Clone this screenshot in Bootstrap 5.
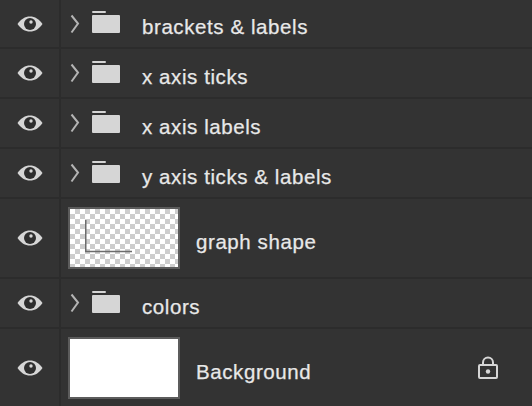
<!doctype html>
<html><head><meta charset="utf-8">
<link href="https://cdn.jsdelivr.net/npm/bootstrap@5.3.0/dist/css/bootstrap.min.css" rel="stylesheet">
<style>
html,body{margin:0;height:406px;overflow:hidden;background:#333}
.panel{font-family:"Liberation Sans",Arial,sans-serif;font-size:20.5px;color:#e8e8e8;letter-spacing:.58px;-webkit-text-stroke:.25px #e8e8e8}
.lyr{height:50px;border-bottom:2px solid #2c2c2c;background:#333}
.lyr.first{height:49px}
.lyr.tall{height:80px}
.lyr.last{height:78px;border-bottom:0}
.vis{width:61px;height:100%;border-right:2px solid #2c2c2c;flex:none}
.eye{width:26px;height:16px;display:block}
.chev{width:10px;height:20px;margin-left:9px;margin-top:0;flex:none}
.fold{width:28px;height:24px;margin-left:12px;margin-top:-1px;flex:none}
.fname{margin-left:22px;margin-top:8px}
.thumb{width:112px;height:62px;margin-left:7px;border:2px solid #5c5c5c;flex:none;background-color:#fff;background-image:conic-gradient(#cdcdcd 25%,#fff 0 50%,#cdcdcd 0 75%,#fff 0);background-size:10px 10px;background-position:0 0}
.thumb.solid{background-image:none}
.tname{margin-left:16px;margin-top:8px}
.lockic{width:22px;height:24px;margin-right:33px;flex:none}
</style></head>
<body>
<svg width="0" height="0" class="d-block position-absolute"><defs>
<symbol id="eye" viewBox="0 0 26 16"><path fill="#d6d6d6" d="M0.5 8C4 3 8 .5 13 .5S22 3 25.5 8C22 13 18 15.500 13 15.500S4 13 .5 8Z"/><circle cx="13" cy="8" r="6" fill="#2e2e2e"/><circle cx="14" cy="6" r="1.700" fill="#d6d6d6"/></symbol>
<symbol id="chev" viewBox="0 0 10 20"><path fill="none" stroke="#b4b4b4" stroke-width="2" d="M1.500 1.500 8 9.500 1.500 18.500"/></symbol>
<symbol id="fold" viewBox="0 0 28 24"><rect x="0" y="0" width="14" height="2" rx="1" fill="#d6d6d6"/><path fill="#d6d6d6" d="M1 4H27a1 1 0 0 1 1 1V21a1 1 0 0 1-1 1H1a1 1 0 0 1-1-1V5a1 1 0 0 1 1-1Z"/></symbol>
</defs></svg>
<div class="panel">
<div class="lyr first d-flex align-items-center"><div class="vis d-flex align-items-center justify-content-center"><svg class="eye"><use href="#eye"/></svg></div><svg class="chev"><use href="#chev"/></svg><svg class="fold"><use href="#fold"/></svg><span class="fname">brackets &amp; labels</span></div>
<div class="lyr d-flex align-items-center"><div class="vis d-flex align-items-center justify-content-center"><svg class="eye"><use href="#eye"/></svg></div><svg class="chev"><use href="#chev"/></svg><svg class="fold"><use href="#fold"/></svg><span class="fname">x axis ticks</span></div>
<div class="lyr d-flex align-items-center"><div class="vis d-flex align-items-center justify-content-center"><svg class="eye"><use href="#eye"/></svg></div><svg class="chev"><use href="#chev"/></svg><svg class="fold"><use href="#fold"/></svg><span class="fname">x axis labels</span></div>
<div class="lyr d-flex align-items-center"><div class="vis d-flex align-items-center justify-content-center"><svg class="eye"><use href="#eye"/></svg></div><svg class="chev"><use href="#chev"/></svg><svg class="fold"><use href="#fold"/></svg><span class="fname">y axis ticks &amp; labels</span></div>
<div class="lyr tall d-flex align-items-center"><div class="vis d-flex align-items-center justify-content-center"><svg class="eye"><use href="#eye"/></svg></div><div class="thumb"><svg width="108" height="58" class="d-block"><path fill="none" stroke="#6c6c6c" stroke-width="1.500" d="M15.750 11V42.500H62"/></svg></div><span class="tname">graph shape</span></div>
<div class="lyr d-flex align-items-center"><div class="vis d-flex align-items-center justify-content-center"><svg class="eye"><use href="#eye"/></svg></div><svg class="chev"><use href="#chev"/></svg><svg class="fold"><use href="#fold"/></svg><span class="fname">colors</span></div>
<div class="lyr last d-flex align-items-center"><div class="vis d-flex align-items-center justify-content-center"><svg class="eye"><use href="#eye"/></svg></div><div class="thumb solid"></div><span class="tname">Background</span><svg class="lockic ms-auto" viewBox="0 0 22 24"><path fill="none" stroke="#d6d6d6" stroke-width="2" d="M6 9V6.500a5 5 0 0 1 10 0V9"/><rect x="2" y="9" width="18" height="13" rx="1" fill="#333" stroke="#d6d6d6" stroke-width="2"/><circle cx="11" cy="15.500" r="2.200" fill="#d6d6d6"/></svg></div>
</div>
</body></html>
